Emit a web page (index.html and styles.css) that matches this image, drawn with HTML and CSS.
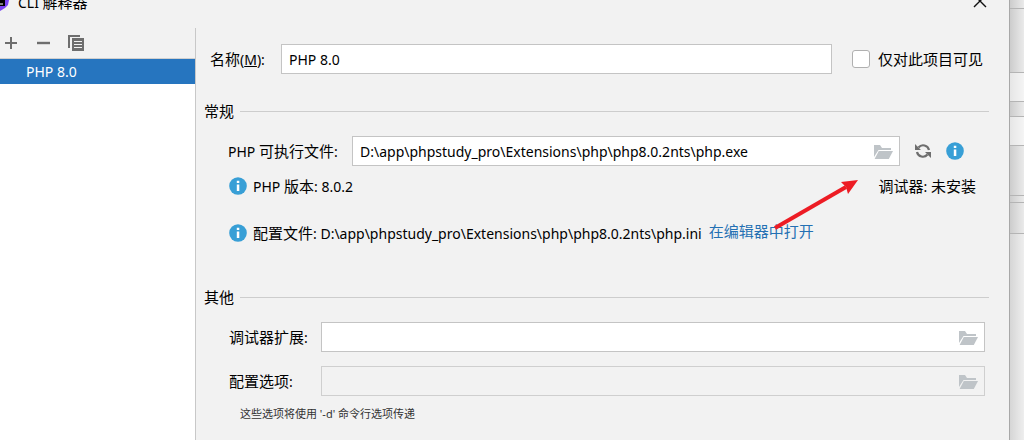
FILE: index.html
```html
<!DOCTYPE html>
<html lang="zh-CN">
<head>
<meta charset="utf-8">
<title>CLI 解释器</title>
<link rel="stylesheet" href="styles.css">
</head>
<body>
<svg class="symbols" aria-hidden="true">
  <symbol id="info" viewBox="0 0 18 18"><circle cx="9" cy="9" r="8.8" fill="#389fd6"/><path d="M7.8 3.8h2.500v2.200H7.800zM7.800 7.400h2.500v6.600H7.800z" fill="#fff"/></symbol>
  <symbol id="folder" viewBox="0 0 20 16"><path d="M1 13V1h6l2 3h9v2H5.500z" fill="#bfc4c8"/><path d="M5.800 7H20l-4.200 8H1.600z" fill="#bfc4c8"/></symbol>
</svg>
<div class="screen">
  <main class="dialog">
    <header class="titlebar">
      <svg class="logo" width="10" height="12" viewBox="0 0 10 12"><path d="M0 0h9l-1 5-3 3-5 3z" fill="#7b45f5"/><path d="M0 0h5v6H0z" fill="#000"/><path d="M0 4h3" stroke="#fff"/></svg>
      <h1 class="title"><span class="latin">CLI </span>解释器</h1>
      <button class="icon-button close" aria-label="关闭"><svg width="14" height="14" viewBox="0 0 14 14"><path d="M1 1l12 12M13 1L1 13" stroke="#111" stroke-width="1.400"/></svg></button>
    </header>
    <div class="content">
      <aside class="sidebar">
        <div class="toolbar">
          <button class="icon-button" aria-label="添加"><svg width="14" height="14" viewBox="0 0 14 14"><path d="M7 1v12M1 7h12" stroke="#6e6e6e" stroke-width="2"/></svg></button>
          <button class="icon-button" aria-label="移除"><svg width="14" height="14" viewBox="0 0 14 14"><path d="M1 7h13" stroke="#6e6e6e" stroke-width="2.400"/></svg></button>
          <button class="icon-button" aria-label="复制"><svg width="16" height="17" viewBox="0 0 16 17"><path d="M0 0h12v2H2v11H0z" fill="#6e6e6e"/><path d="M4 3h12v13H4z" fill="#6e6e6e"/><path d="M6 6.500h8M6 9.500h8M6 12.500h8" stroke="#f2f2f2"/></svg></button>
        </div>
        <ul class="list"><li class="item">PHP 8.0</li></ul>
      </aside>
      <form class="form">
        <div class="row name-row">
          <label class="name-label" for="name">名称<span class="latin">(<u>M</u>):</span></label>
          <input class="field" id="name" type="text" value="PHP 8.0">
          <input class="check" id="only" type="checkbox">
          <label for="only">仅对此项目可见</label>
        </div>
        <h2 class="section">常规</h2>
        <div class="row exe-row">
          <label class="exe-label" for="exe"><span class="latin">PHP </span>可执行文件<span class="latin">:</span></label>
          <div class="browse"><input class="field" id="exe" type="text" value="D:\app\phpstudy_pro\Extensions\php\php8.0.2nts\php.exe"><button type="button" class="icon-button folder" aria-label="浏览"><svg width="20" height="16"><use href="#folder"/></svg></button></div>
          <button type="button" class="icon-button sync" aria-label="刷新"><svg width="16" height="16" viewBox="0 0 16 16"><path d="M3.500 4.500A6 6 0 0 1 14 7M12.500 11.500A6 6 0 0 1 2 9" fill="none" stroke="#6e6e6e" stroke-width="2.200"/><path d="M0 1v6h6zM16 15V9h-6z" fill="#6e6e6e"/></svg></button>
          <svg width="18" height="18"><use href="#info"/></svg>
        </div>
        <div class="row info-row">
          <svg width="18" height="18"><use href="#info"/></svg>
          <div class="text"><span class="latin">PHP </span>版本<span class="latin">: 8.0.2</span></div>
          <div class="text debugger">调试器<span class="latin">: </span>未安装</div>
        </div>
        <div class="row config-row">
          <svg width="18" height="18"><use href="#info"/></svg>
          <div class="text">配置文件<span class="latin">: D:\app\phpstudy_pro\Extensions\php\php8.0.2nts\php.ini</span></div>
          <a class="link" href="#editor">在编辑器中打开</a>
        </div>
        <h2 class="section">其他</h2>
        <div class="row option-row">
          <label class="option-label" for="ext">调试器扩展<span class="latin">:</span></label>
          <div class="browse"><input class="field" id="ext" type="text"><button type="button" class="icon-button folder" aria-label="浏览"><svg width="20" height="16"><use href="#folder"/></svg></button></div>
        </div>
        <div class="row option-row">
          <label class="option-label" for="opts">配置选项<span class="latin">:</span></label>
          <div class="browse"><input class="field" id="opts" type="text" disabled><button type="button" class="icon-button folder" aria-label="浏览"><svg width="20" height="16"><use href="#folder"/></svg></button></div>
        </div>
        <p class="hint">这些选项将使用 '-d' 命令行选项传递</p>
      </form>
    </div>
    <svg class="arrow" width="86" height="52" viewBox="0 0 86 52"><path d="M1 49L72 8" stroke="#ed1c24" stroke-width="4"/><path d="M84 1L74 15 72 8 67 3z" fill="#ed1c24"/></svg>
  </main>
  <div class="backdrop">
    <div class="strip strip-top"></div>
    <div class="strip strip-head"></div>
    <div class="strip strip-field"></div>
    <div class="strip strip-gap"></div>
    <div class="strip strip-field"></div>
    <div class="strip strip-body"></div>
    <div class="strip strip-line"></div>
    <div class="strip strip-tab"></div>
    <div class="strip-rest"></div>
  </div>
</div>
</body>
</html>
```
FILE: styles.css
```css
* { box-sizing: border-box; }
body {
  margin: 0;
  overflow: hidden;
  background: #f2f2f2;
  color: #000;
  font: 14px/20px "Noto Sans", "Noto Sans CJK SC", sans-serif;
}
input, button { font: inherit; color: inherit; }
svg { display: block; flex: none; }
.symbols { position: absolute; width: 0; height: 0; }
.screen { display: flex; min-height: 100vh; }
.dialog {
  position: relative;
  display: flex;
  flex: 1;
  flex-direction: column;
  min-width: 0;
  border-right: 1px solid #a8a8a8;
}
.titlebar {
  display: flex;
  align-items: flex-start;
  height: 28px;
  padding-right: 22px;
}
.title { margin: 0 auto 0 8px; font-size: 15px; font-weight: 400; line-height: 4px; }
.icon-button { display: block; padding: 0; border: 0; background: none; }
.close { margin-top: -6px; }
.content { display: flex; flex: 1; }
.sidebar {
  display: flex;
  flex: none;
  flex-direction: column;
  width: 196px;
  border-right: 1px solid #c8c8c8;
}
.toolbar {
  display: flex;
  align-items: center;
  gap: 18px;
  height: 31px;
  padding-left: 4px;
  border-bottom: 1px solid #d0d0d0;
}
.list { flex: 1; margin: 0; padding: 0; background: #fff; list-style: none; }
.item { height: 25px; padding-left: 26px; background: #2675bf; color: #fff; line-height: 26px; }
.form { flex: 1; min-width: 0; padding: 16px 20px 0 8px; }
.row { display: flex; align-items: center; white-space: nowrap; }
.row label, .text, .link, .section { font-size: 15px; }
.text { white-space: pre; }
.latin { font-size: 14px; }
.field {
  flex: 1;
  width: 100%;
  min-width: 0;
  height: 30px;
  padding: 0 7px;
  border: 1px solid #c4c4c4;
  border-radius: 0;
  background: #fff;
}
.field:disabled { border-color: #cfcfcf; background: #f2f2f2; }
.name-row { height: 30px; padding: 0 6px; }
.name-label { width: 71px; }
.check {
  width: 18px;
  height: 18px;
  margin: 0 8px 0 20px;
  border: 1px solid #b0b0b0;
  border-radius: 3px;
  background: #fff;
  appearance: none;
}
.section {
  display: flex;
  align-items: center;
  gap: 6px;
  margin: 27px 0 15px;
  font-weight: 400;
}
.section::after { flex: 1; height: 1px; background: #cdcdcd; content: ""; }
.exe-row { padding: 0 25px 0 24px; }
.exe-label { width: 124px; }
.browse { display: flex; flex: 1; position: relative; }
.browse .field { padding-right: 32px; }
.folder { position: absolute; top: 8px; right: 7px; }
.sync { margin: 0 15px; }
.info-row { gap: 6px; height: 20px; margin-top: 10px; padding: 0 13px 0 25px; }
.debugger { margin-left: auto; }
.config-row { gap: 6px; height: 20px; margin-top: 27px; padding-left: 25px; }
.link { margin: 0 0 4px 1px; color: #2470b3; text-decoration: none; }
.config-row + .section { margin-top: 44px; }
.option-row { margin-bottom: 14px; padding: 0 4px 0 25px; }
.option-label { width: 92px; }
.hint { margin: -6px 0 0 36px; color: #333; font-size: 11px; }
.arrow { position: absolute; top: 179px; left: 774px; }
.backdrop {
  display: flex;
  flex-direction: column;
  width: 14px;
  background: linear-gradient(to right, #00000028, #00000008), #f2f2f2;
}
.strip { border-bottom: 1px solid #b4b4b4; }
.strip-top { height: 9px; }
.strip-head { height: 64px; }
.strip-field { height: 29px; background: #ffffff80; }
.strip-gap { height: 15px; }
.strip-body { height: 50px; }
.strip-line { height: 7px; }
.strip-tab { height: 31px; }
.strip-rest { flex: 1; background: #ffffff30; }
```
